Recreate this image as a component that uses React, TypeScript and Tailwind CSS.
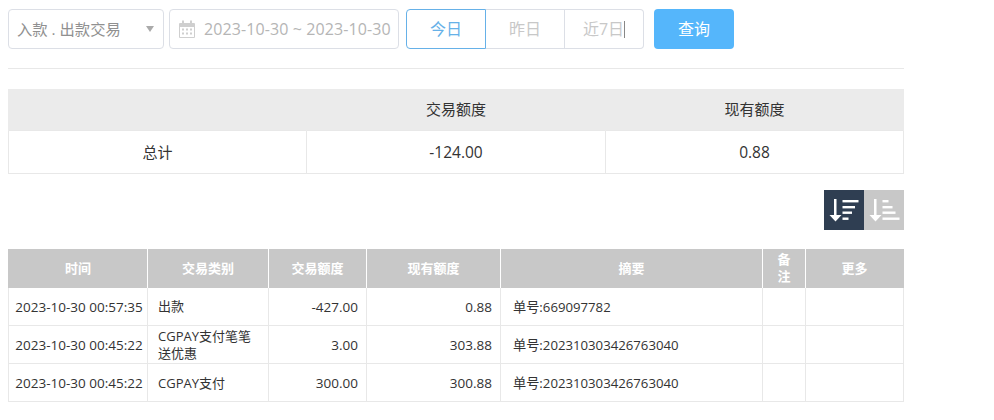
const rows = [
  { time: "2023-10-30 00:57:35", type: "出款", amount: "-427.00", balance: "0.88", memo: "单号:669097782" },
  { time: "2023-10-30 00:45:22", type: "CGPAY支付笔笔送优惠", amount: "3.00", balance: "303.88", memo: "单号:202310303426763040" },
  { time: "2023-10-30 00:45:22", type: "CGPAY支付", amount: "300.00", balance: "300.88", memo: "单号:202310303426763040" },
];

const font = "font-['Open_Sans','Noto_Sans_CJK_SC',sans-serif]";

function CalendarIcon() {
  return (
    <svg width="16" height="18" viewBox="0 0 16 18" fill="#cfcfcf">
      <rect x="3" y="0.5" width="2" height="4" />
      <rect x="11" y="0.5" width="2" height="4" />
      <path d="M1 3h14a1 1 0 0 1 1 1v13a1 1 0 0 1-1 1H1a1 1 0 0 1-1-1V4a1 1 0 0 1 1-1zm0 4v10h14V7z" fillRule="evenodd" />
      <rect x="3" y="8.5" width="2" height="2" />
      <rect x="7" y="8.5" width="2" height="2" />
      <rect x="11" y="8.5" width="2" height="2" />
      <rect x="3" y="12.5" width="2" height="2" />
      <rect x="7" y="12.5" width="2" height="2" />
      <rect x="11" y="12.5" width="2" height="2" />
    </svg>
  );
}

// widest bar on top
function SortDescIcon() {
  return (
    <svg width="40" height="40" viewBox="0 0 40 40" fill="#fff">
      <rect x="10" y="9" width="2.5" height="17" />
      <path d="M5.5 25h12l-6 6.5z" />
      <rect x="18.5" y="10" width="16" height="2.4" />
      <rect x="18.5" y="16" width="12.5" height="2.4" />
      <rect x="18.5" y="21.5" width="9.5" height="2.4" />
      <rect x="18.5" y="27.5" width="6" height="2.4" />
    </svg>
  );
}

// widest bar at the bottom
function SortAscIcon() {
  return (
    <svg width="40" height="40" viewBox="0 0 40 40" fill="#fff">
      <rect x="10" y="9" width="2.5" height="17" />
      <path d="M5.5 25h12l-6 6.5z" />
      <rect x="18.5" y="10" width="6" height="2.4" />
      <rect x="18.5" y="16" width="10" height="2.4" />
      <rect x="18.5" y="21.5" width="13" height="2.4" />
      <rect x="18.5" y="27.5" width="17" height="2.4" />
    </svg>
  );
}

export default function App() {
  return (
    <div className={`${font} w-[994px] h-[420px] overflow-hidden bg-white pl-2 pt-[9px] text-[#333]`}>
      <div className="w-[896px]">
        {/* Filter bar */}
        <div className="flex items-start h-[40px]">
          <div className="w-[156px] h-[40px] flex items-center justify-between border border-[#dcdfe6] rounded pl-2 pr-[9px] text-[15.3px] text-[#909090] whitespace-nowrap">
            <span>入款 . 出款交易</span>
            <span className="w-0 h-0 border-x-[4px] border-x-transparent border-t-[6px] border-t-[#aaa]" />
          </div>
          <div className="ml-[5px] w-[230px] h-[40px] flex items-center border border-[#dcdfe6] rounded pl-[9px] text-[16px] text-[#b5b5b5] tracking-[0.1px] whitespace-nowrap">
            <CalendarIcon />
            <span className="ml-[9px]">2023-10-30 ~ 2023-10-30</span>
          </div>
          <div className="ml-[7px] flex h-[40px] text-[16px] text-[#c8c8c8]">
            <div className="w-[80px] flex items-center justify-center border border-[#66b1e8] rounded-l text-[#66b1e8]">今日</div>
            <div className="w-[79px] flex items-center justify-center border-y border-r border-[#dcdfe6]">昨日</div>
            <div className="w-[79px] flex items-center justify-center border-y border-r border-[#dcdfe6] rounded-r">
              近7日<span className="w-px h-[17px] bg-[#888]" />
            </div>
          </div>
          <div className="ml-[10px] w-[80px] h-[40px] flex items-center justify-center rounded bg-[#55b6fb] text-[16px] text-white">查询</div>
        </div>

        <div className="mt-[19px] border-t border-[#e8e8e8]" />

        {/* Totals */}
        <table className="mt-[20px] w-full table-fixed border-collapse text-[15px]">
          <colgroup>
            <col className="w-[298px]" />
            <col className="w-[299px]" />
            <col />
          </colgroup>
          <thead>
            <tr className="h-[41px] bg-[#ebebeb]">
              <th className="font-normal border-x border-[#ebebeb]" />
              <th className="font-normal border-x border-[#ebebeb]">交易额度</th>
              <th className="font-normal border-x border-[#ebebeb]">现有额度</th>
            </tr>
          </thead>
          <tbody>
            <tr className="h-[43px] text-center">
              <td className="border border-[#e8e8e8] pt-[2px]">总计</td>
              <td className="border border-[#e8e8e8] pt-[2px] text-[15.5px]">-124.00</td>
              <td className="border border-[#e8e8e8] pt-[2px] text-[15.5px]">0.88</td>
            </tr>
          </tbody>
        </table>

        {/* Sort toggle */}
        <div className="mt-4 flex justify-end">
          <div className="w-[40px] h-[40px] bg-[#2f3e52]"><SortDescIcon /></div>
          <div className="w-[40px] h-[40px] bg-[#c8c8c8]"><SortAscIcon /></div>
        </div>

        {/* Ledger */}
        <table className="mt-[19px] w-full table-fixed border-collapse text-[13.5px] leading-[17px]">
          <colgroup>
            <col className="w-[139px]" />
            <col className="w-[121px]" />
            <col className="w-[98px]" />
            <col className="w-[134px]" />
            <col className="w-[262px]" />
            <col className="w-[43px]" />
            <col />
          </colgroup>
          <thead>
            <tr className="h-[39px] bg-[#c8c8c8] text-white text-[13px]">
              {["时间", "交易类别", "交易额度", "现有额度", "摘要", "备注", "更多"].map((h, i) => (
                <th key={h} className={`font-bold border-x border-white first:border-l-[#c8c8c8] last:border-r-[#c8c8c8] ${i === 5 ? "px-3.5" : ""}`}>
                  {h}
                </th>
              ))}
            </tr>
          </thead>
          <tbody>
            {rows.map((r, i) => (
              <tr key={i} className="h-[38px] border-b border-[#e8e8e8]">
                <td className="border-x border-[#e8e8e8] text-center whitespace-nowrap pl-[2px] pt-[2px]">{r.time}</td>
                <td className="border-x border-[#e8e8e8] pl-[10px] pr-2 pt-[1px] text-[13px]">{r.type}</td>
                <td className="border-x border-[#e8e8e8] text-right pr-2 pt-[2px]">{r.amount}</td>
                <td className="border-x border-[#e8e8e8] text-right pr-2 pt-[2px]">{r.balance}</td>
                <td className="border-x border-[#e8e8e8] pl-3 pt-[2px] text-[13.2px]">{r.memo}</td>
                <td className="border-x border-[#e8e8e8]" />
                <td className="border-x border-[#e8e8e8]" />
              </tr>
            ))}
          </tbody>
        </table>
      </div>
    </div>
  );
}
